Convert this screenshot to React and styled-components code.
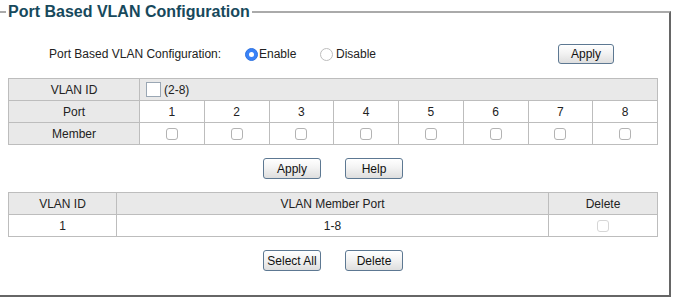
import React from "react";
import styled, { createGlobalStyle } from "styled-components";

const Global = createGlobalStyle`
  html, body { margin: 0; padding: 0; background: #fff; }
  body {
    font-family: "Liberation Sans", Arial, Helvetica, sans-serif;
    font-size: 12px;
    color: #222;
  }
`;

const Frame = styled.fieldset`
  margin: 3px 15px 0 -2px;
  padding: 0 0 11px 0;
  border-style: solid;
  border-width: 2px;
  border-color: #aaa #666 #666 #aaa;
  min-width: 0;
`;

const Legend = styled.legend`
  margin-left: 6px;
  padding: 0 2px;
  font-size: 16px;
  font-weight: bold;
  color: #17495c;
  line-height: normal;
`;

const Content = styled.div`
  width: 650px;
  margin-left: 8px;
  display: flex;
  flex-direction: column;
`;

const TopRow = styled.div`
  display: flex;
  align-items: center;
  height: 20px;
  margin-top: 23px;
  padding-left: 41px;
`;

const Label = styled.span`
  width: 196px;
`;

const Option = styled.label`
  display: flex;
  align-items: center;
  width: ${(p) => p.$w}px;
`;

const Radio = styled.span`
  width: 13px;
  height: 13px;
  box-sizing: border-box;
  border-radius: 50%;
  margin-right: ${(p) => (p.$on ? 1 : 3)}px;
  background: ${(p) => (p.$on ? "#3a82f7" : "#fff")};
  border: 1px solid ${(p) => (p.$on ? "#2f73e0" : "#bdbdbd")};
  display: flex;
  align-items: center;
  justify-content: center;
  &::after {
    content: "";
    display: ${(p) => (p.$on ? "block" : "none")};
    width: 5px;
    height: 5px;
    border-radius: 50%;
    background: #fff;
  }
`;

const Button = styled.button`
  font-family: "Liberation Sans", Arial, Helvetica, sans-serif;
  font-size: 12px;
  color: #111;
  width: ${(p) => p.$w || 58}px;
  height: ${(p) => p.$h || 21}px;
  padding: 0;
  border: 1px solid #5d7892;
  border-radius: 3px;
  background: linear-gradient(#ffffff, #f3f3f3 45%, #dedede);
  box-shadow: inset 0 1px 0 #fff;
`;

const Spacer = styled.div`
  flex: 1;
`;

const ButtonRow = styled.div`
  display: flex;
  justify-content: center;
  gap: 24px;
  margin: 13px 0;
`;

const Table = styled.table`
  border-collapse: collapse;
  width: 650px;
  table-layout: fixed;
  margin-top: ${(p) => p.$mt || 0}px;
`;

const Cell = styled.td`
  border: 1px solid #bdbdbd;
  height: 21px;
  padding: 0;
  text-align: center;
  vertical-align: middle;
  background: ${(p) => (p.$head ? "#e9e9e9" : "#fff")};
  color: #222;
`;

const IdCell = styled(Cell)`
  text-align: left;
  padding-left: 6px;
`;

const IdWrap = styled.div`
  display: flex;
  align-items: center;
  gap: 3px;
`;

const IdInput = styled.span`
  width: 15px;
  height: 15px;
  box-sizing: border-box;
  border: 1px solid #9aa7b4;
  background: #fff;
`;

const Check = styled.span`
  display: inline-block;
  vertical-align: middle;
  width: 12px;
  height: 12px;
  box-sizing: border-box;
  border: 1px solid ${(p) => (p.$dim ? "#d6d6d6" : "#b3b3b3")};
  border-radius: 3px;
  background: #fff;
`;

const ports = [1, 2, 3, 4, 5, 6, 7, 8];

export default function App() {
  return (
    <>
      <Global />
      <Frame>
        <Legend>Port Based VLAN Configuration</Legend>
        <Content>
          <TopRow>
            <Label>Port Based VLAN Configuration:</Label>
            <Option $w={75}>
              <Radio $on />
              Enable
            </Option>
            <Option $w={120}>
              <Radio />
              Disable
            </Option>
            <Spacer />
            <Button $w={56} $h={20} style={{ marginRight: 44 }}>Apply</Button>
          </TopRow>

          <Table $mt={14}>
            <colgroup>
              <col style={{ width: 131 }} />
              {ports.map((p) => (
                <col key={p} />
              ))}
            </colgroup>
            <tbody>
              <tr>
                <Cell $head>VLAN ID</Cell>
                <IdCell $head colSpan={8}>
                  <IdWrap>
                    <IdInput />
                    (2-8)
                  </IdWrap>
                </IdCell>
              </tr>
              <tr>
                <Cell $head>Port</Cell>
                {ports.map((p) => (
                  <Cell key={p}>{p}</Cell>
                ))}
              </tr>
              <tr>
                <Cell $head>Member</Cell>
                {ports.map((p) => (
                  <Cell key={p}>
                    <Check />
                  </Cell>
                ))}
              </tr>
            </tbody>
          </Table>

          <ButtonRow>
            <Button>Apply</Button>
            <Button>Help</Button>
          </ButtonRow>

          <Table>
            <colgroup>
              <col style={{ width: 108 }} />
              <col />
              <col style={{ width: 109 }} />
            </colgroup>
            <tbody>
              <tr>
                <Cell $head>VLAN ID</Cell>
                <Cell $head>VLAN Member Port</Cell>
                <Cell $head>Delete</Cell>
              </tr>
              <tr>
                <Cell>1</Cell>
                <Cell>1-8</Cell>
                <Cell>
                  <Check $dim />
                </Cell>
              </tr>
            </tbody>
          </Table>

          <ButtonRow>
            <Button>Select All</Button>
            <Button>Delete</Button>
          </ButtonRow>
        </Content>
      </Frame>
    </>
  );
}
